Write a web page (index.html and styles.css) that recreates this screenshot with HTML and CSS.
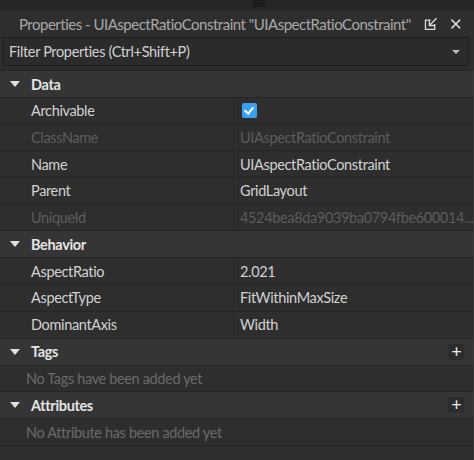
FILE: index.html
```html
<!DOCTYPE html>
<html lang="en">

<head>
    <meta charset="UTF-8">
    <title>Properties</title>
    <link rel="stylesheet" href="styles.css">
</head>

<body>
    <div class="topstrip"><div class="tab"></div></div>
    <div class="titlebar">
        <span class="title">Properties - UIAspectRatioConstraint "UIAspectRatioConstraint"</span>
        <svg class="icon" width="14" height="14" viewBox="0 0 14 14">
            <path d="M7 3H1.5v9.5H11V7" fill="none" stroke="#d8d8d8" stroke-width="1.4"/>
            <path d="M13 1L6 8M5.5 3.5V8.5H10.5" fill="none" stroke="#d8d8d8" stroke-width="1.4"/>
        </svg>
        <svg class="icon" width="12" height="12" viewBox="0 0 12 12">
            <path d="M1.5 1.5l9 9M10.5 1.5l-9 9" stroke="#d8d8d8" stroke-width="1.5"/>
        </svg>
    </div>
    <div class="filter">
        <span>Filter Properties (Ctrl+Shift+P)</span>
        <span class="arrow"></span>
    </div>

    <div class="panel">
        <div class="list">
            <!-- Data -->
            <div class="header"><span class="tri"></span>Data</div>
            <div class="row"><div class="name">Archivable</div><div class="value"><span class="check"></span></div></div>
            <div class="row off"><div class="name">ClassName</div><div class="value">UIAspectRatioConstraint</div></div>
            <div class="row"><div class="name">Name</div><div class="value">UIAspectRatioConstraint</div></div>
            <div class="row"><div class="name">Parent</div><div class="value">GridLayout</div></div>
            <div class="row off"><div class="name">UniqueId</div><div class="value">4524bea8da9039ba0794fbe600014...</div></div>

            <!-- Behavior -->
            <div class="header"><span class="tri"></span>Behavior</div>
            <div class="row"><div class="name">AspectRatio</div><div class="value">2.021</div></div>
            <div class="row"><div class="name">AspectType</div><div class="value">FitWithinMaxSize</div></div>
            <div class="row"><div class="name">DominantAxis</div><div class="value">Width</div></div>

            <!-- Tags -->
            <div class="header"><span class="tri"></span>Tags<span class="plus">+</span></div>
            <div class="empty">No Tags have been added yet</div>

            <!-- Attributes -->
            <div class="header"><span class="tri"></span>Attributes<span class="plus">+</span></div>
            <div class="empty">No Attribute has been added yet</div>
        </div>
        <div class="scrollbar"></div>
    </div>
</body>

</html>
```

FILE: styles.css
```css
body {
    margin: 0;
    height: 460px;
    background-color: #2e2e2e;
    font-family: Lato, "Noto Sans", sans-serif;
    font-size: 14.5px;
    letter-spacing: -0.35px;
    color: #d2d2d2;
    overflow: hidden;
    display: flex;
    flex-direction: column;
}

.topstrip {
    height: 10px;
    background-color: #262626;
    position: relative;
}

.tab {
    position: absolute;
    left: 253px;
    top: 0;
    width: 12px;
    height: 7px;
    background-color: #1c1c1c;
}

.titlebar {
    height: 27px;
    display: flex;
    align-items: center;
    padding: 0 12px 0 19px;
    background-color: #2e2e2e;
    color: #a8a8a8;
    font-size: 15px;
    letter-spacing: -0.5px;
}

.title {
    flex: 1;
    white-space: nowrap;
}

.icon {
    margin-left: 13px;
}

.filter {
    height: 27px;
    margin: 0 5px 0 2px;
    border: 1px solid #1e1e1e;
    background-color: #2b2b2b;
    display: flex;
    align-items: center;
    padding: 0 8px 0 6px;
    color: #d0d0d0;
}

.filter span:first-child {
    flex: 1;
}

.arrow {
    border-left: 4px solid transparent;
    border-right: 4px solid transparent;
    border-top: 4px solid #bdbdbd;
}

.panel {
    flex: 1;
    display: flex;
    margin-top: 4px;
}

.list {
    flex: 1;
    border-top: 1px solid #242424;
}

.scrollbar {
    width: 6px;
    background-color: #222;
    border-left: 1px solid #3a3a3a;
}

.header {
    height: 26px;
    border-bottom: 1px solid #242424;
    background-color: #353535;
    display: flex;
    align-items: center;
    font-weight: bold;
    color: #e4e4e4;
    padding-left: 10px;
}

.tri {
    width: 0;
    height: 0;
    border-left: 5px solid transparent;
    border-right: 5px solid transparent;
    border-top: 6px solid #e0e0e0;
    margin-right: 11px;
}

.plus {
    margin-left: auto;
    margin-right: 9px;
    width: 16px;
    height: 16px;
    background-color: #2c2c2c;
    color: #e8e8e8;
    font-weight: normal;
    font-size: 18px;
    line-height: 15px;
    text-align: center;
}

.row {
    height: 25.7px;
    border-bottom: 1px solid #252525;
    display: flex;
}

.name {
    width: 202px;
    padding-left: 31px;
    display: flex;
    align-items: center;
    border-right: 1px solid #282828;
}

.value {
    flex: 1;
    padding-left: 6px;
    display: flex;
    align-items: center;
    white-space: nowrap;
}

.off {
    color: #5c5c5c;
}

.check {
    width: 15px;
    height: 15px;
    border-radius: 2px;
    background-color: #3aa0f0;
    position: relative;
    margin-left: 2px;
}

.check::after {
    content: "";
    position: absolute;
    left: 4px;
    top: 2px;
    width: 4px;
    height: 7px;
    border-right: 2px solid #fff;
    border-bottom: 2px solid #fff;
    transform: rotate(40deg);
}

.empty {
    height: 25.7px;
    border-bottom: 1px solid #252525;
    display: flex;
    align-items: center;
    padding-left: 26px;
    color: #6a6a6a;
}
```
